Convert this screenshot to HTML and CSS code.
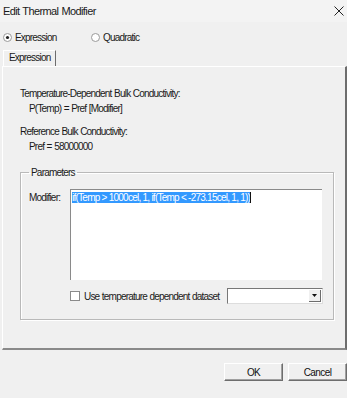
FILE: index.html
```html
<!DOCTYPE html>
<html lang="en">

<head>
  <meta charset="UTF-8">
  <title>Edit Thermal Modifier</title>
  <link rel="stylesheet" href="styles.css">
</head>

<body>
  <div class="dialog">
    <header class="titlebar">
      <span class="titlebar__text">Edit Thermal Modifier</span>
      <svg class="titlebar__close" width="10" height="10" viewBox="0 0 10 10">
        <path d="M0.5 0.5 L9.5 9.5 M9.5 0.5 L0.5 9.5" stroke="#222" stroke-width="1" fill="none"/>
      </svg>
    </header>

    <div class="modes">
      <label class="radio">
        <svg class="radio__dot" width="9" height="9" viewBox="0 0 9 9">
          <circle cx="4.5" cy="4.5" r="4" fill="#fff" stroke="#9a9a9a"/>
          <circle cx="4.5" cy="4.5" r="1.6" fill="#222"/>
        </svg>
        Expression
      </label>
      <label class="radio radio--second">
        <svg class="radio__dot" width="9" height="9" viewBox="0 0 9 9">
          <circle cx="4.5" cy="4.5" r="4" fill="#fff" stroke="#9a9a9a"/>
        </svg>
        Quadratic
      </label>
    </div>

    <div class="tabs">
      <div class="tab">Expression</div>
    </div>

    <div class="panel">
      <div class="info">Temperature-Dependent Bulk Conductivity:</div>
      <div class="info info--indent">P(Temp) = Pref [Modifier]</div>
      <div class="info info--gap">Reference Bulk Conductivity:</div>
      <div class="info info--indent">Pref = 58000000</div>

      <fieldset class="group">
        <legend class="group__title">Parameters</legend>
        <div class="field">
          <span class="field__label">Modifier:</span>
          <div class="field__box"><span class="field__sel">if(Temp &gt; 1000cel, 1, if(Temp &lt; -273.15cel, 1, 1))</span><span class="field__caret"></span></div>
        </div>
        <div class="options">
          <span class="check"></span>
          <span class="options__label">Use temperature dependent dataset</span>
          <div class="combo">
            <span class="combo__btn">
              <svg width="5" height="3" viewBox="0 0 5 3"><path d="M0 0 H5 L2.5 3 Z" fill="#111"/></svg>
            </span>
          </div>
        </div>
      </fieldset>
    </div>

    <div class="actions">
      <button class="btn">OK</button>
      <button class="btn">Cancel</button>
    </div>
  </div>
</body>

</html>
```

FILE: styles.css
```css
html {
  font-size: 10px;
}

body {
  background-color: #f0f0f0;
  margin: 0;
  overflow: hidden;
}

* {
  font-family: "Liberation Sans", Arial, sans-serif;
}

.dialog {
  color: #1a1a1a;
  font-size: 10px;
  letter-spacing: -0.8px;
  width: 347px;
  word-spacing: 0.5px;
}

.titlebar {
  align-items: center;
  background-color: #f3f3f3;
  box-sizing: border-box;
  display: flex;
  height: 22px;
  justify-content: space-between;
  padding: 0 3px 0 3px;
}

.titlebar__text {
  font-size: 11px;
  letter-spacing: -0.6px;
}

.modes {
  align-items: center;
  display: flex;
  height: 12px;
  margin-top: 9px;
  padding-left: 3px;
}

.radio {
  align-items: center;
  display: flex;
  gap: 3px;
  width: 88px;
}

.radio__dot {
  flex: none;
}

.tabs {
  display: flex;
  margin-top: 7px;
  padding-left: 3px;
}

.tab {
  border-left: 1px solid #fff;
  border-right: 1px solid #6d6d6d;
  border-top: 1px solid #fff;
  box-sizing: border-box;
  height: 16px;
  line-height: 14px;
  padding: 0 5px;
}

.panel {
  border-bottom: 2px solid #8a8a8a;
  border-left: 1px solid #fff;
  border-right: 2px solid #6d6d6d;
  border-top: 1px solid #fff;
  box-sizing: border-box;
  height: 284px;
  margin-left: 2px;
  padding: 19px 11px 0 17px;
}

.info {
  height: 15px;
  line-height: 15px;
}

.info--indent {
  padding-left: 9px;
}

.info--gap {
  margin-top: 8px;
}

.group {
  border: 1px solid #b9b9b9;
  box-shadow: inset 1px 1px 0 #fff, 1px 1px 0 #fff;
  box-sizing: border-box;
  height: 153px;
  margin: 13px 0 0 0;
  padding: 11px 10px 0 8px;
}

.group__title {
  padding: 0 2px;
}

.field {
  display: flex;
}

.field__label {
  margin-top: 3px;
  width: 41px;
}

.field__box {
  background-color: #fff;
  border-left: 1px solid #8a8a8a;
  border-top: 1px solid #8a8a8a;
  box-sizing: border-box;
  height: 91px;
  padding: 2px 1px;
  width: 252px;
}

.field__sel {
  background-color: #3399ff;
  color: #fff;
  letter-spacing: -0.75px;
  word-spacing: 0;
}

.field__caret {
  border-left: 1px solid #111;
  display: inline-block;
  height: 11px;
  vertical-align: -2px;
}

.options {
  align-items: center;
  display: flex;
  margin-top: 8px;
  padding-left: 41px;
}

.check {
  background-color: #fff;
  border: 1px solid #8a8a8a;
  box-sizing: border-box;
  flex: none;
  height: 10px;
  width: 10px;
}

.options__label {
  margin-left: 4px;
  width: 143px;
}

.combo {
  background-color: #fff;
  border-bottom: 1px solid #ddd;
  border-left: 1px solid #777;
  border-right: 1px solid #ddd;
  border-top: 1px solid #777;
  box-sizing: border-box;
  display: flex;
  height: 16px;
  justify-content: flex-end;
  padding: 1px;
  width: 96px;
}

.combo__btn {
  align-items: center;
  background-color: #f0f0f0;
  border-bottom: 1px solid #6d6d6d;
  border-right: 1px solid #6d6d6d;
  box-sizing: border-box;
  display: flex;
  justify-content: center;
  width: 12px;
}

.actions {
  display: flex;
  gap: 5px;
  justify-content: flex-end;
  margin-top: 13px;
}

.btn {
  appearance: none;
  background-color: #f0f0f0;
  border-bottom: 1px solid #6d6d6d;
  border-left: 1px solid #fff;
  border-right: 1px solid #6d6d6d;
  border-top: 1px solid #fff;
  box-shadow: inset -1px -1px 0 #a0a0a0;
  color: #111;
  font-size: 10px;
  height: 18px;
  letter-spacing: -0.6px;
  padding: 0;
  width: 59px;
}
```
